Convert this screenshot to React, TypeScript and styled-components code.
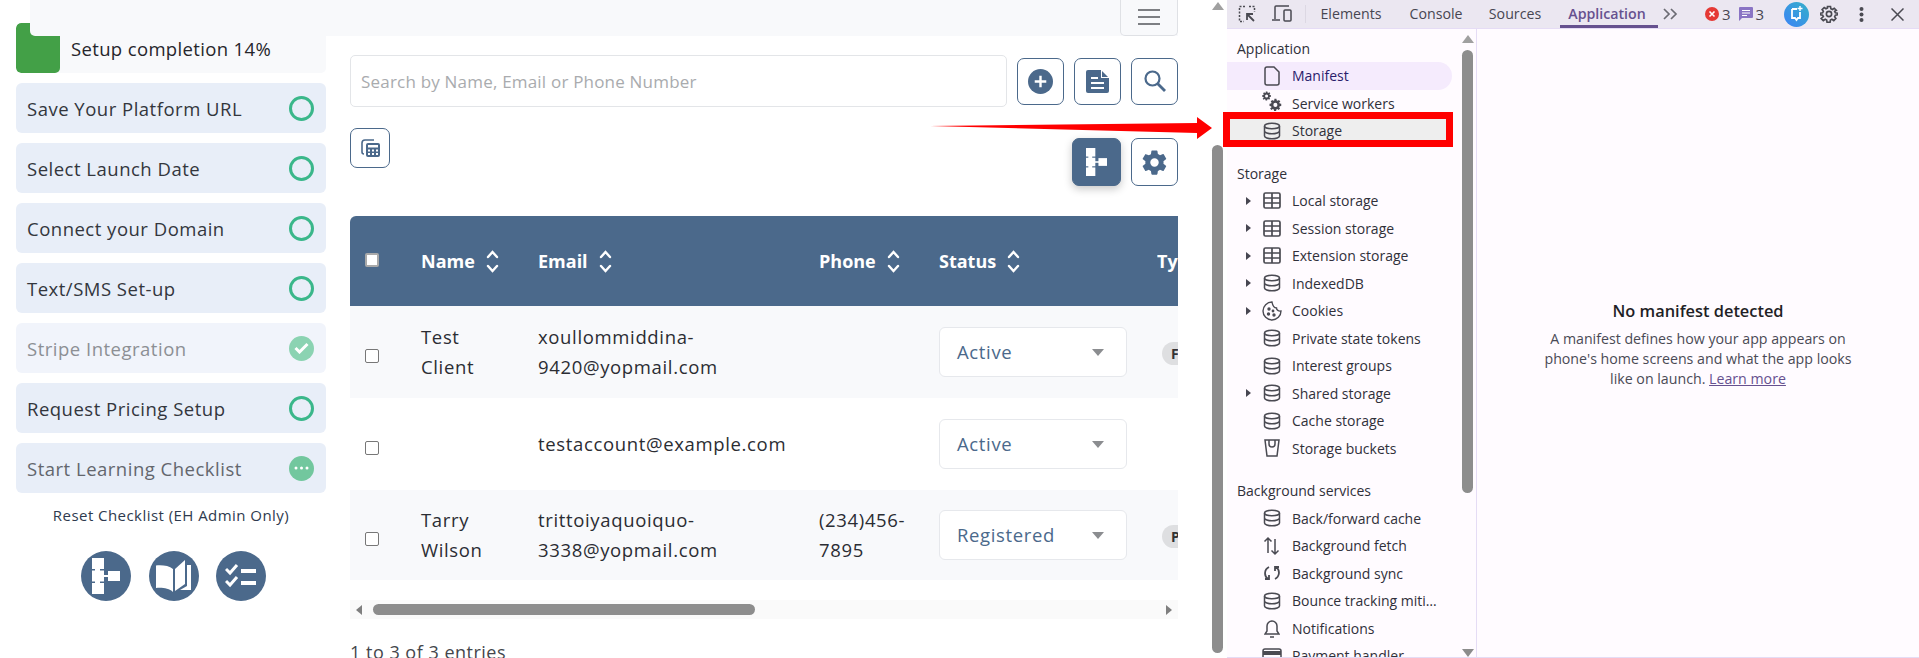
import React from "react";
import styled, { createGlobalStyle } from "styled-components";

const Global = createGlobalStyle`
  html, body { margin: 0; padding: 0; background: #fff; overflow: hidden; }
  * { box-sizing: border-box; }
`;

const APP_FONT = `"Open Sans", "Lato", sans-serif`;
const DT_FONT = `"Open Sans", "Noto Sans", sans-serif`;
const BLUE = "#4b698b";

const Page = styled.div`
  position: relative;
  display: flex;
  width: 1919px;
  height: 658px;
  overflow: hidden;
  font-family: ${APP_FONT};
`;
const AppPane = styled.div`
  position: relative;
  display: flex;
  width: 1178px;
  flex: none;
`;
const TopBar = styled.div`
  position: absolute;
  left: 30px;
  top: 0;
  width: 1148px;
  height: 36px;
  background: #f8f9fb;
  border-bottom-left-radius: 5px;
  display: flex;
  justify-content: flex-end;
`;
const Burger = styled.button`
  width: 58px;
  height: 36px;
  background: #f8f9fb;
  border: 1px solid #dfe1e5;
  border-top: none;
  border-radius: 0 0 5px 5px;
  padding: 9px 17px 10px;
  display: flex;
  flex-direction: column;
  justify-content: space-between;
`;
const BurgerLine = styled.span`
  display: block;
  height: 2px;
  background: #7d7f83;
`;
const Sidebar = styled.aside`
  width: 350px;
  flex: none;
  padding: 23px 24px 0 16px;
  display: flex;
  flex-direction: column;
  gap: 10px;
`;
const Progress = styled.div`
  height: 50px;
  flex: none;
  background: #f8f9fb;
  border-radius: 5px;
  display: flex;
  align-items: center;
  overflow: hidden;
  font-size: 18.500px;
  letter-spacing: 0.35px;
  color: #26262b;
`;
const ProgressFill = styled.div`
  width: 44px;
  height: 100%;
  background: #43a047;
  border-radius: 5px;
  margin-right: 11px;
`;
const Item = styled.div<{ $muted?: boolean; $dim?: boolean }>`
  height: 50px;
  flex: none;
  padding: 0 12px 0 11px;
  background: ${(p) => (p.$muted ? "#f1f4fb" : "#e8eef8")};
  border-radius: 6px;
  display: flex;
  align-items: center;
  justify-content: space-between;
  font-size: 18.500px;
  letter-spacing: 0.5px;
  color: ${(p) => (p.$muted ? "#8c8f94" : p.$dim ? "#63666d" : "#33363d")};
`;
const Ring = styled.span`
  width: 25px;
  height: 25px;
  border: 3px solid #3ab78a;
  border-radius: 50%;
`;
const StatusDot = styled.span<{ $color: string }>`
  width: 25px;
  height: 25px;
  border-radius: 50%;
  background: ${(p) => p.$color};
  display: flex;
  align-items: center;
  justify-content: center;
`;
const Reset = styled.div`
  text-align: center;
  font-size: 15px;
  letter-spacing: 0.45px;
  color: #2e3a4e;
  line-height: 24px;
`;
const QuickIcons = styled.div`
  margin-top: 14px;
  padding-left: 65px;
  display: flex;
  gap: 17.500px;
`;
const RoundIcon = styled.div`
  width: 50px;
  height: 50px;
  flex: none;
  border-radius: 50%;
  background: ${BLUE};
  display: flex;
  align-items: center;
  justify-content: center;
`;
const Main = styled.main`
  flex: 1;
  min-width: 0;
  padding-top: 55px;
  display: flex;
  flex-direction: column;
`;
const SearchRow = styled.div`
  display: flex;
  flex: none;
  align-items: center;
  height: 52px;
`;
const SearchBox = styled.div`
  width: 657px;
  height: 52px;
  border: 1px solid #e3e5e8;
  border-radius: 5px;
  padding-left: 10px;
  display: flex;
  align-items: center;
  margin-right: 10px;
  font-size: 17px;
  letter-spacing: 0.2px;
  color: #a9abae;
`;
const IconButton = styled.button<{ $w?: number; $h?: number; $solid?: boolean }>`
  width: ${(p) => p.$w ?? 47}px;
  height: ${(p) => p.$h ?? 47}px;
  padding: 0;
  flex: none;
  display: flex;
  align-items: center;
  justify-content: center;
  background: ${(p) => (p.$solid ? BLUE : "#fff")};
  border: 1px solid ${BLUE};
  border-radius: 7px;
  box-shadow: ${(p) => (p.$solid ? "0 3px 8px rgba(0,0,0,.22)" : "none")};
`;
const ButtonGroup = styled.div`
  display: flex;
  gap: 10px;
`;
const ToolsRow = styled.div`
  display: flex;
  flex: none;
  justify-content: space-between;
  align-items: flex-start;
  margin-top: 21px;
`;
const ToolsRight = styled(ButtonGroup)`
  margin-top: 10px;
`;
const TableWrap = styled.div`
  flex: none;
  margin-top: 30px;
  width: 828px;
  overflow: hidden;
  border-top-left-radius: 6px;
`;
const Table = styled.table`
  width: 1007px;
  table-layout: fixed;
  border-collapse: collapse;
  font-size: 18.500px;
  letter-spacing: 0.65px;
  color: #2b2d33;
`;
const HeadRow = styled.tr`
  height: 90px;
  background: ${BLUE};
  color: #fff;
  font-weight: 700;
  font-size: 18px;
  letter-spacing: 0;
`;
const Th = styled.th<{ $w: number }>`
  width: ${(p) => p.$w}px;
  padding: 0;
  text-align: left;
  white-space: nowrap;
  overflow: hidden;
`;
const HeadLabel = styled.span`
  display: inline-flex;
  align-items: center;
  gap: 11px;
`;
const Row = styled.tr<{ $even?: boolean }>`
  height: 92px;
  background: ${(p) => (p.$even ? "#fff" : "#f8f9fb")};
  &:last-child {
    height: 90px;
  }
`;
const Td = styled.td`
  padding: 0;
  line-height: 30px;
  vertical-align: middle;
`;
const Line = styled.div`
  white-space: nowrap;
`;
const CheckBox = styled.span<{ $head?: boolean }>`
  display: block;
  width: 14px;
  height: 14px;
  margin: ${(p) => (p.$head ? "-3px 0 0 15px" : "8px 0 0 15px")};
  border-radius: 2px;
  border: ${(p) => (p.$head ? "2px solid #a9a9a9" : "1px solid #777")};
  background: #fff;
`;
const Select = styled.div`
  width: 188px;
  height: 50px;
  background: #fff;
  border: 1px solid #e6e8ec;
  border-radius: 6px;
  padding: 0 22px 0 17px;
  display: flex;
  align-items: center;
  justify-content: space-between;
  color: ${BLUE};
`;
const Caret = styled.span`
  width: 0;
  height: 0;
  border-left: 6px solid transparent;
  border-right: 6px solid transparent;
  border-top: 7px solid #8b8d90;
`;
const Chip = styled.span`
  display: inline-block;
  margin-left: 5px;
  padding: 0 10px 0 9px;
  height: 23px;
  line-height: 23px;
  border-radius: 12px;
  background: #dedfe1;
  font-size: 14px;
  font-weight: 700;
  letter-spacing: 0;
  color: #333;
`;
const HScroll = styled.div`
  flex: none;
  margin-top: 20px;
  width: 828px;
  height: 19px;
  background: #fafafa;
  display: flex;
  align-items: center;
  justify-content: space-between;
  padding: 0 6px;
`;
const HThumb = styled.div`
  width: 382px;
  height: 11px;
  margin-left: 11px;
  margin-right: auto;
  border-radius: 6px;
  background: #8d8d8d;
`;
const ArrowLeft = styled.span`
  width: 0;
  height: 0;
  border-top: 5.500px solid transparent;
  border-bottom: 5.500px solid transparent;
  border-right: 6px solid #7f7f7f;
`;
const ArrowRight = styled.span`
  width: 0;
  height: 0;
  border-top: 5.500px solid transparent;
  border-bottom: 5.500px solid transparent;
  border-left: 6px solid #7f7f7f;
`;
const Entries = styled.div`
  flex: none;
  margin-top: 21px;
  font-size: 18px;
  letter-spacing: 0.5px;
  color: #44464c;
  line-height: 24px;
`;
const PageScroll = styled.div`
  width: 49px;
  flex: none;
  padding: 2px 4px 3px 34px;
  display: flex;
  flex-direction: column;
  align-items: center;
  background: #fff;
`;
const ArrowUp = styled.span`
  flex: none;
  width: 0;
  height: 0;
  border-left: 6px solid transparent;
  border-right: 6px solid transparent;
  border-bottom: 8px solid #a0a0a0;
`;
const ArrowDown = styled.span`
  flex: none;
  width: 0;
  height: 0;
  border-left: 6px solid transparent;
  border-right: 6px solid transparent;
  border-top: 8px solid #8c8c8c;
`;
const VThumb = styled.div<{ $top: number; $h: number }>`
  flex: none;
  width: 11px;
  height: ${(p) => p.$h}px;
  margin-top: ${(p) => p.$top}px;
  border-radius: 6px;
  background: #8d8d8d;
`;
const DevTools = styled.div`
  flex: 1;
  min-width: 0;
  display: flex;
  flex-direction: column;
  background: #fffbff;
  font-family: ${DT_FONT};
  border-bottom: 1px solid #e5dcf5;
`;
const TabBar = styled.div`
  height: 29px;
  flex: none;
  background: #ebe7f1;
  border-bottom: 1px solid #e5dcf5;
  display: flex;
  align-items: center;
  padding-left: 11px;
  color: #474651;
`;
const TabIcons = styled.div`
  display: flex;
  align-items: center;
  gap: 15px;
  width: 67px;
  height: 100%;
`;
const TabDivider = styled.span`
  width: 1px;
  height: 18px;
  background: #dcd8e3;
`;
const Tab = styled.div<{ $active?: boolean; $w: number; $pr?: number }>`
  width: ${(p) => p.$w}px;
  flex: none;
  height: 28px;
  padding-right: ${(p) => p.$pr ?? 0}px;
  text-align: center;
  line-height: 28px;
  font-size: 14.200px;
  font-weight: ${(p) => (p.$active ? 600 : 400)};
  color: ${(p) => (p.$active ? "#66518f" : "#474651")};
  border-bottom: 3px solid ${(p) => (p.$active ? "#66518f" : "transparent")};
`;
const TabEnd = styled.div`
  flex: 1;
  display: flex;
  align-items: center;
  font-size: 15px;
  height: 100%;
`;
const Count = styled.span`
  margin-left: 3px;
  color: #474651;
`;
const Panels = styled.div`
  flex: 1;
  min-height: 0;
  display: flex;
`;
const Tree = styled.nav`
  position: relative;
  width: 250px;
  flex: none;
  border-right: 1px solid #e5dcf5;
  overflow: hidden;
  display: flex;
`;
const TreeList = styled.div`
  width: 225px;
  flex: none;
  padding-top: 5.500px;
  font-size: 14px;
  color: #30303a;
`;
const TreeHead = styled.div<{ $gap?: number }>`
  height: 27.500px;
  margin-top: ${(p) => p.$gap ?? 0}px;
  padding-left: 10px;
  line-height: 27.500px;
`;
const TreeRow = styled.div<{ $selected?: boolean; $hover?: boolean }>`
  height: 27.500px;
  display: flex;
  align-items: center;
  white-space: nowrap;
  background: ${(p) => (p.$selected ? "#f5ebfd" : p.$hover ? "#eeeeee" : "transparent")};
  color: ${(p) => (p.$selected ? "#2a1c6c" : "inherit")};
  border-radius: ${(p) => (p.$selected ? "0 14px 14px 0" : "0")};
`;
const Twist = styled.span<{ $on?: boolean }>`
  width: 0;
  height: 0;
  margin-left: 19px;
  border-top: 4.500px solid transparent;
  border-bottom: 4.500px solid transparent;
  border-left: 5px solid ${(p) => (p.$on ? "#474651" : "transparent")};
`;
const TreeIcon = styled.span`
  width: 20px;
  margin-left: 11px;
  margin-right: 10px;
  display: flex;
  justify-content: center;
  flex: none;
`;
const TreeScroll = styled.div`
  width: 13px;
  margin-left: 9px;
  padding-top: 6px;
  display: flex;
  flex-direction: column;
  align-items: center;
  height: 628px;
`;
const Empty = styled.div`
  flex: 1;
  display: flex;
  flex-direction: column;
  align-items: center;
  padding-top: 271px;
  color: #4a4a55;
  font-size: 14.200px;
  line-height: 20px;
  text-align: center;
`;
const EmptyTitle = styled.div`
  font-size: 16.400px;
  font-weight: 600;
  color: #1f1f26;
  line-height: 22px;
  margin-bottom: 7px;
`;
const Learn = styled.a`
  color: #66518f;
  text-decoration: underline;
`;
const RedBox = styled.div`
  position: absolute;
  left: 1223px;
  top: 112px;
  width: 230px;
  height: 35px;
  border: 7px solid #ff0000;
  pointer-events: none;
`;
const RedArrow = styled.svg`
  position: absolute;
  left: 925px;
  top: 112px;
`;

const SitemapGlyph = ({ h = 36 }: { h?: number }) => (
  <svg width={(h * 28) / 36} height={h} viewBox="0 0 28 36" fill="#fff">
    <rect x="0" y="0" width="12" height="11" />
    <rect x="0" y="12.500" width="12" height="11" />
    <rect x="0" y="25" width="12" height="11" />
    <rect x="3" y="10" width="5" height="4" />
    <rect x="3" y="22" width="5" height="4" />
    <rect x="11" y="17" width="6" height="2" />
    <rect x="16" y="13" width="12" height="10" />
  </svg>
);
const BookGlyph = () => (
  <svg width="37" height="34" viewBox="0 0 37 34" fill="#fff">
    <path d="M18 10C14 6.500 7 6 1 6.500V29C7 28.500 14 29 18 33Z" />
    <path d="M20 10 30 1V25L20 32Z" />
    <path d="M32 6H36V31H25L32 27Z" />
  </svg>
);
const ChecklistGlyph = () => (
  <svg width="33" height="26" viewBox="0 0 33 26" fill="none" stroke="#fff">
    <path d="M1 6 5 10 12 2" strokeWidth="3" />
    <path d="M1 18 5 22 12 14" strokeWidth="3" />
    <path d="M16 8H31M16 20H31" strokeWidth="4" />
  </svg>
);
const SortIcon = () => (
  <svg width="13" height="23" viewBox="0 0 13 23" fill="none" stroke="#fff" strokeWidth="2.400" strokeLinecap="round">
    <path d="M2 7 6.500 2 11 7M2 16 6.500 21 11 16" />
  </svg>
);
const AddIcon = () => (
  <svg width="25" height="25" viewBox="0 0 26 26">
    <circle cx="13" cy="13" r="13" fill={BLUE} />
    <path d="M13 7V19M7 13H19" stroke="#fff" strokeWidth="2.500" />
  </svg>
);
const DocIcon = () => (
  <svg width="23" height="23" viewBox="0 0 23 23" fill={BLUE}>
    <path d="M2 0H15L23 8V21A2 2 0 0 1 21 23H2A2 2 0 0 1 0 21V2A2 2 0 0 1 2 0Z" />
    <path d="M15 0V8H23V6L17 0Z" fill="#fff" />
    <path d="M16 1V7H22Z" fill={BLUE} />
    <path d="M5 8H12M5 13H18M5 18H18" stroke="#fff" strokeWidth="2" />
  </svg>
);
const SearchIcon = () => (
  <svg width="22" height="22" viewBox="0 0 22 22" fill="none" stroke={BLUE}>
    <circle cx="8.500" cy="8.500" r="7" strokeWidth="2.200" />
    <path d="M13.500 13.500 21 21" strokeWidth="2.800" />
  </svg>
);
const CalcIcon = () => (
  <svg width="19" height="18" viewBox="0 0 19 18">
    <path d="M3 15A2 2 0 0 1 1 13V4A3 3 0 0 1 4 1H13" fill="none" stroke={BLUE} strokeWidth="1.600" />
    <rect x="5" y="4" width="14" height="14" rx="2" fill={BLUE} />
    <rect x="7" y="6" width="10" height="2.500" fill="#fff" />
    <g fill="#fff">
      <rect x="7" y="10.500" width="2" height="2" /><rect x="11" y="10.500" width="2" height="2" /><rect x="15" y="10.500" width="2" height="2" />
      <rect x="7" y="14" width="2" height="2" /><rect x="11" y="14" width="2" height="2" /><rect x="15" y="14" width="2" height="2" />
    </g>
  </svg>
);
const GearIcon = () => (
  <svg width="29" height="29" viewBox="0 0 24 24">
    <path
      fill={BLUE}
      fillRule="evenodd"
      d="M19.400 13c.04-.33.1-.66.1-1s-.06-.67-.1-1l2.100-1.650a.5.5 0 0 0 .12-.64l-2-3.460a.5.5 0 0 0-.6-.22l-2.490 1a7.300 7.300 0 0 0-1.730-1l-.38-2.650A.5.5 0 0 0 13.930 2h-4a.5.5 0 0 0-.5.420L9.050 5.070c-.61.25-1.170.59-1.690 1l-2.490-1a.5.5 0 0 0-.6.220l-2 3.460a.5.5 0 0 0 .12.640L4.500 11c-.04.33-.1.66-.1 1s.06.670.1 1l-2.110 1.650a.5.5 0 0 0-.12.640l2 3.460c.12.220.38.300.6.220l2.490-1c.52.400 1.080.740 1.690 1l.38 2.650c.04.240.25.420.5.420h4c.25 0 .46-.18.5-.42l.38-2.650c.61-.26 1.170-.6 1.690-1l2.490 1c.23.08.48 0 .6-.22l2-3.460a.5.500 0 0 0-.12-.64ZM12 15.500A3.500 3.500 0 1 1 12 8.500a3.500 3.500 0 0 1 0 7Z"
    />
  </svg>
);

const S = "#4a4a52";
const Db = () => (
  <svg width="18" height="18" viewBox="0 0 18 18" fill="none" stroke={S} strokeWidth="1.500">
    <ellipse cx="9" cy="4" rx="7.500" ry="2.800" />
    <path d="M1.500 4V14C1.500 15.500 5 16.800 9 16.800S16.500 15.500 16.500 14V4M1.500 9C1.500 10.500 5 11.800 9 11.800S16.500 10.500 16.500 9" />
  </svg>
);
const Grid = () => (
  <svg width="18" height="17" viewBox="0 0 18 17" fill="none" stroke={S} strokeWidth="1.700">
    <rect x="1" y="1" width="16" height="15" rx="1.500" />
    <path d="M1 6H17M1 11H17M9 1V16" />
  </svg>
);
const Cookie = () => (
  <svg width="20" height="20" viewBox="0 0 20 20" fill="none" stroke={S} strokeWidth="1.400">
    <path d="M10 1A9 9 0 1 0 19 10C16.500 10.500 14.500 9 14.500 7C12 7 10.500 4 10 1Z" />
    <circle cx="7" cy="8" r="1" fill={S} /><circle cx="6.500" cy="13" r="1" fill={S} /><circle cx="12" cy="14" r="1" fill={S} /><circle cx="11" cy="10" r=".7" fill={S} />
  </svg>
);
const Bucket = () => (
  <svg width="16" height="18" viewBox="0 0 16 18" fill="none" stroke={S} strokeWidth="1.500">
    <path d="M1 1H15L13 17H3ZM5 1V5A3 3 0 0 0 11 5V1" />
  </svg>
);
const FileI = () => (
  <svg width="16" height="20" viewBox="0 0 16 20" fill="none" stroke={S} strokeWidth="1.500">
    <path d="M1 3A2 2 0 0 1 3 1H10L15 6V17A2 2 0 0 1 13 19H3A2 2 0 0 1 1 17Z" />
  </svg>
);
const GearPath = () => (
  <path
    fill={S}
    fillRule="evenodd"
    d="M10 1h4l.5 3 2 1 2.500-1.700 2.800 2.800L19.500 8.500l1 2 3 .5v4l-3 .5-1 2 1.700 2.500-2.800 2.800-2.500-1.700-2 1-.5 3h-4l-.5-3-2-1-2.500 1.700-2.800-2.800L4.500 17.500l-1-2-3-.5v-4l3-.5 1-2L2.800 6.100l2.800-2.800L8 5l2-1ZM12 9a4 4 0 1 0 0 8 4 4 0 0 0 0-8Z"
  />
);
const Gears = () => (
  <svg width="22" height="22" viewBox="0 0 22 22" style={{ marginTop: -4 }}>
    <g transform="scale(.42)"><GearPath /></g>
    <g transform="translate(8 8) scale(.56)"><GearPath /></g>
  </svg>
);
const Fetch = () => (
  <svg width="18" height="20" viewBox="0 0 18 20" fill="none" stroke={S} strokeWidth="1.500">
    <path d="M5 17V2M1.500 5.500 5 2 8.500 5.500M12 3V18M8.500 14.500 12 18 15.500 14.500" />
  </svg>
);
const Sync = () => (
  <svg width="16" height="18" viewBox="0 0 16 18" fill="none" stroke={S} strokeWidth="1.800">
    <path d="M5 3A7 7 0 0 0 4 15M11 15A7 7 0 0 0 12 3M1 15H5V11M15 3H11V7" />
  </svg>
);
const Bell = () => (
  <svg width="16" height="19" viewBox="0 0 16 19" fill="none" stroke={S} strokeWidth="1.500">
    <path d="M1 15H15L13 12V7A5 5 0 0 0 3 7V12ZM6 18H10" />
  </svg>
);
const Card = () => (
  <svg width="20" height="16" viewBox="0 0 20 16">
    <rect x="1" y="1" width="18" height="14" rx="2" fill="none" stroke={S} strokeWidth="1.500" />
    <rect x="1" y="3" width="18" height="4" fill={S} />
  </svg>
);

type Tw = { label: string; icon: React.ReactNode; twist?: boolean };
const storage: Tw[] = [
  { label: "Local storage", icon: <Grid />, twist: true },
  { label: "Session storage", icon: <Grid />, twist: true },
  { label: "Extension storage", icon: <Grid />, twist: true },
  { label: "IndexedDB", icon: <Db />, twist: true },
  { label: "Cookies", icon: <Cookie />, twist: true },
  { label: "Private state tokens", icon: <Db /> },
  { label: "Interest groups", icon: <Db /> },
  { label: "Shared storage", icon: <Db />, twist: true },
  { label: "Cache storage", icon: <Db /> },
  { label: "Storage buckets", icon: <Bucket /> },
];
const background: Tw[] = [
  { label: "Back/forward cache", icon: <Db /> },
  { label: "Background fetch", icon: <Fetch /> },
  { label: "Background sync", icon: <Sync /> },
  { label: "Bounce tracking miti…", icon: <Db /> },
  { label: "Notifications", icon: <Bell /> },
  { label: "Payment handler", icon: <Card /> },
];

const checklist = ["Save Your Platform URL", "Select Launch Date", "Connect your Domain", "Text/SMS Set-up"];
const rows = [
  { name: ["Test", "Client"], email: ["xoullommiddina-", "9420@yopmail.com"], phone: [] as string[], status: "Active", chip: "Free" },
  { name: [], email: ["testaccount@example.com"], phone: [], status: "Active", chip: "" },
  { name: ["Tarry", "Wilson"], email: ["trittoiyaquoiquo-", "3338@yopmail.com"], phone: ["(234)456-", "7895"], status: "Registered", chip: "Paid" },
];

const TreeItem = ({ item }: { item: Tw }) => (
  <TreeRow>
    <Twist $on={item.twist} />
    <TreeIcon>{item.icon}</TreeIcon>
    {item.label}
  </TreeRow>
);

export default function App() {
  return (
    <Page>
      <Global />
      <AppPane>
        <Sidebar>
          <Progress>
            <ProgressFill />
            Setup completion 14%
          </Progress>
          {checklist.map((c) => (
            <Item key={c}>
              {c}
              <Ring />
            </Item>
          ))}
          <Item $muted>
            Stripe Integration
            <StatusDot $color="#8bd3b2">
              <svg width="15" height="12" viewBox="0 0 15 12" fill="none" stroke="#fff" strokeWidth="3">
                <path d="M1.500 6 5.500 10 13.500 2" />
              </svg>
            </StatusDot>
          </Item>
          <Item>
            Request Pricing Setup
            <Ring />
          </Item>
          <Item $dim>
            Start Learning Checklist
            <StatusDot $color="#72c79e">
              <svg width="15" height="4" viewBox="0 0 15 4" fill="#fff">
                <circle cx="2" cy="2" r="1.500" /><circle cx="7.500" cy="2" r="1.500" /><circle cx="13" cy="2" r="1.500" />
              </svg>
            </StatusDot>
          </Item>
          <Reset>Reset Checklist (EH Admin Only)</Reset>
          <QuickIcons>
            <RoundIcon><SitemapGlyph /></RoundIcon>
            <RoundIcon><BookGlyph /></RoundIcon>
            <RoundIcon><ChecklistGlyph /></RoundIcon>
          </QuickIcons>
        </Sidebar>
        <Main>
          <SearchRow>
            <SearchBox>Search by Name, Email or Phone Number</SearchBox>
            <ButtonGroup>
              <IconButton><AddIcon /></IconButton>
              <IconButton><DocIcon /></IconButton>
              <IconButton><SearchIcon /></IconButton>
            </ButtonGroup>
          </SearchRow>
          <ToolsRow>
            <IconButton $w={40} $h={40}><CalcIcon /></IconButton>
            <ToolsRight>
              <IconButton $w={49} $h={48} $solid><SitemapGlyph h={28} /></IconButton>
              <IconButton $h={48}><GearIcon /></IconButton>
            </ToolsRight>
          </ToolsRow>
          <TableWrap>
            <Table>
              <thead>
                <HeadRow>
                  <Th $w={71}><CheckBox $head /></Th>
                  <Th $w={117}><HeadLabel>Name <SortIcon /></HeadLabel></Th>
                  <Th $w={281}><HeadLabel>Email <SortIcon /></HeadLabel></Th>
                  <Th $w={120}><HeadLabel>Phone <SortIcon /></HeadLabel></Th>
                  <Th $w={218}><HeadLabel>Status <SortIcon /></HeadLabel></Th>
                  <Th $w={200}>Type</Th>
                </HeadRow>
              </thead>
              <tbody>
                {rows.map((r, i) => (
                  <Row key={i} $even={i === 1}>
                    <Td><CheckBox /></Td>
                    <Td>{r.name.map((l) => <Line key={l}>{l}</Line>)}</Td>
                    <Td>{r.email.map((l) => <Line key={l}>{l}</Line>)}</Td>
                    <Td>{r.phone.map((l) => <Line key={l}>{l}</Line>)}</Td>
                    <Td>
                      <Select>{r.status}<Caret /></Select>
                    </Td>
                    <Td>{r.chip && <Chip>{r.chip}</Chip>}</Td>
                  </Row>
                ))}
              </tbody>
            </Table>
          </TableWrap>
          <HScroll>
            <ArrowLeft />
            <HThumb />
            <ArrowRight />
          </HScroll>
          <Entries>1 to 3 of 3 entries</Entries>
        </Main>
        <TopBar>
          <Burger>
            <BurgerLine />
            <BurgerLine />
            <BurgerLine />
          </Burger>
        </TopBar>
      </AppPane>
      <PageScroll>
        <ArrowUp />
        <VThumb $top={135} $h={508} />
      </PageScroll>
      <DevTools>
        <TabBar>
          <TabIcons>
            <svg width="18" height="18" viewBox="0 0 18 18" fill="none" stroke={S} strokeWidth="1.500">
              <path d="M7 1.500H1.500V16.500H6M11 1.500H16.500V7" strokeDasharray="2 1.500" />
              <path d="M16 16 9 9M9 15V9H15" strokeWidth="1.800" />
            </svg>
            <svg width="21" height="18" viewBox="0 0 21 18" fill="none" stroke={S} strokeWidth="1.500">
              <path d="M4 14V2A1 1 0 0 1 5 1H18M1 15H9" />
              <rect x="13" y="5" width="7" height="11" rx="1" />
            </svg>
          </TabIcons>
          <TabDivider />
          <Tab $w={96} $pr={6}>Elements</Tab>
          <Tab $w={68}>Console</Tab>
          <Tab $w={90}>Sources</Tab>
          <Tab $w={98} $pr={4} $active>Application</Tab>
          <TabEnd>
            <svg style={{ marginLeft: 5 }} width="15" height="12" viewBox="0 0 15 12" fill="none" stroke="#6b6b73" strokeWidth="1.700">
              <path d="M1 1 6 6 1 11M8 1 13 6 8 11" />
            </svg>
            <svg style={{ marginLeft: 27 }} width="14" height="14" viewBox="0 0 14 14">
              <circle cx="7" cy="7" r="7" fill="#e53935" />
              <path d="M4.500 4.500 9.500 9.500M9.500 4.500 4.500 9.500" stroke="#fff" strokeWidth="1.600" />
            </svg>
            <Count>3</Count>
            <svg style={{ marginLeft: 8 }} width="14" height="14" viewBox="0 0 14 14">
              <path d="M1 0H13A1 1 0 0 1 14 1V10A1 1 0 0 1 13 11H3L0 14V1A1 1 0 0 1 1 0Z" fill="#8a74c4" />
              <path d="M3 3.500H11M3 6H11M3 8.500H8" stroke="#fff" />
            </svg>
            <Count>3</Count>
            <svg style={{ marginLeft: 20 }} width="25" height="25" viewBox="0 0 25 25">
              <defs>
                <linearGradient id="ai" x1="0" y1="1" x2="1" y2="0">
                  <stop offset="0" stopColor="#3b82f6" />
                  <stop offset="1" stopColor="#35b0c9" />
                </linearGradient>
              </defs>
              <circle cx="12.500" cy="12.500" r="12.500" fill="url(#ai)" />
              <path d="M8 7H13M16 10V16H14L12.500 18 11 16H8V7" fill="none" stroke="#fff" strokeWidth="1.800" />
              <path d="M16 4V9M13.500 6.500H18.500" stroke="#fff" strokeWidth="1.400" />
            </svg>
            <svg style={{ marginLeft: 11 }} width="18" height="18" viewBox="0 0 24 24" fill="none" stroke={S} strokeWidth="2.200">
              <circle cx="12" cy="12" r="3.500" />
              <path d="M10 2h4l.5 3 2 1 2.500-1.700 2.800 2.800L19.500 8.500l1 2 3 .5v2l-3 .5-1 2 1.700 2.500-2.800 2.800-2.500-1.700-2 1-.5 3h-4l-.5-3-2-1-2.500 1.700-2.800-2.800L4.500 15.500l-1-2-3-.5v-2l3-.5 1-2L2.800 6.100l2.800-2.800L8 5l2-1Z" />
            </svg>
            <svg style={{ marginLeft: 21 }} width="5" height="15" viewBox="0 0 5 15" fill={S}>
              <circle cx="2.500" cy="2" r="2" /><circle cx="2.500" cy="7.500" r="2" /><circle cx="2.500" cy="13" r="2" />
            </svg>
            <svg style={{ marginLeft: 27 }} width="13" height="13" viewBox="0 0 13 13" fill="none" stroke={S} strokeWidth="1.500">
              <path d="M.5.5 12.500 12.500M12.500.5.5 12.500" />
            </svg>
          </TabEnd>
        </TabBar>
        <Panels>
          <Tree>
            <TreeList>
              <TreeHead>Application</TreeHead>
              <TreeRow $selected>
                <Twist />
                <TreeIcon><FileI /></TreeIcon>
                Manifest
              </TreeRow>
              <TreeRow>
                <Twist />
                <TreeIcon><Gears /></TreeIcon>
                Service workers
              </TreeRow>
              <TreeRow $hover>
                <Twist />
                <TreeIcon><Db /></TreeIcon>
                Storage
              </TreeRow>
              <TreeHead $gap={15}>Storage</TreeHead>
              {storage.map((t) => <TreeItem key={t.label} item={t} />)}
              <TreeHead $gap={15}>Background services</TreeHead>
              {background.map((t) => <TreeItem key={t.label} item={t} />)}
            </TreeList>
            <TreeScroll>
              <ArrowUp />
              <VThumb $top={7} $h={443} />
              <span style={{ flex: 1 }} />
              <ArrowDown />
            </TreeScroll>
          </Tree>
          <Empty>
            <EmptyTitle>No manifest detected</EmptyTitle>
            <span>A manifest defines how your app appears on</span>
            <span>phone's home screens and what the app looks</span>
            <span>like on launch. <Learn>Learn more</Learn></span>
          </Empty>
        </Panels>
      </DevTools>
      <RedArrow width="290" height="36" viewBox="0 0 290 36">
        <path d="M5 14 272 11V5L287 16 272 27V21Z" fill="#ff0000" />
      </RedArrow>
      <RedBox />
    </Page>
  );
}
